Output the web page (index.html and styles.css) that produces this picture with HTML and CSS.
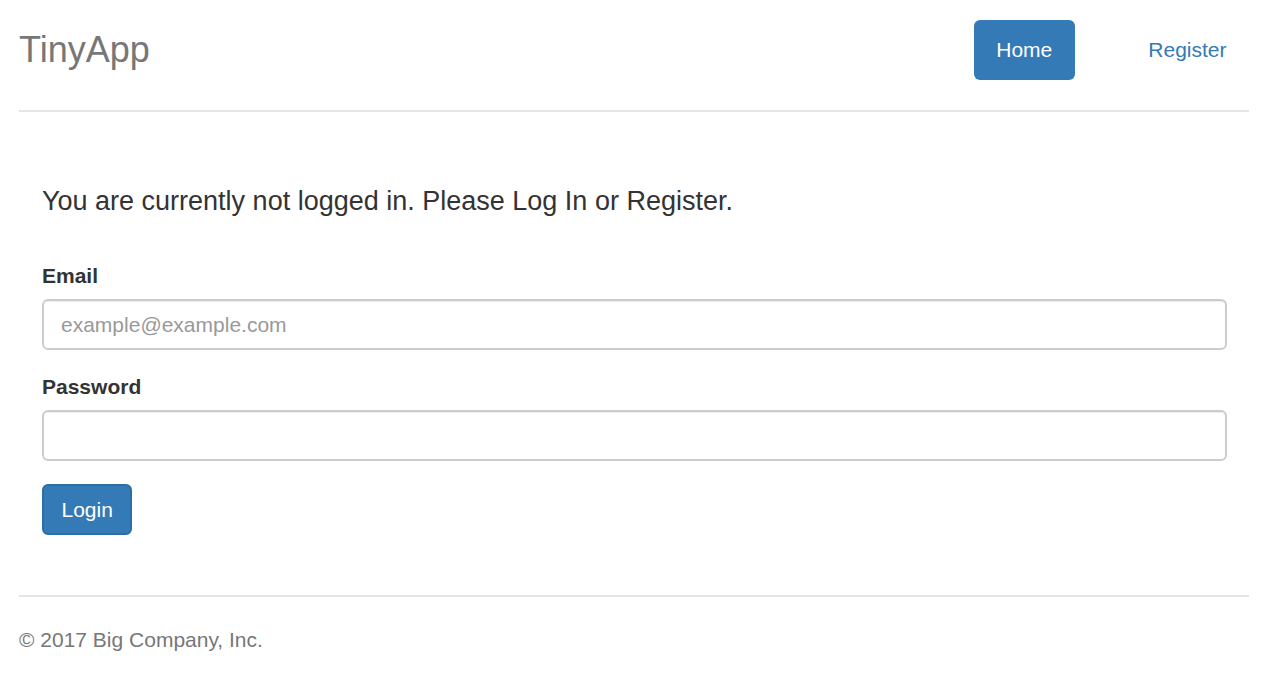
FILE: index.html
```html
<!DOCTYPE html>
<html lang="en">
<head>
<meta charset="utf-8">
<title>TinyApp</title>
<link rel="stylesheet" href="styles.css">
</head>
<body>
<div class="page">
  <header class="header">
    <h3 class="brand">TinyApp</h3>
    <nav class="nav">
      <a class="pill active" href="#">Home</a>
      <a class="pill" href="#">Register</a>
    </nav>
  </header>
  <main class="main">
    <h4 class="notice">You are currently not logged in. Please Log In or Register.</h4>
    <form class="form">
      <div class="form-group">
        <label class="label" for="email">Email</label>
        <input class="input" id="email" type="email" placeholder="example@example.com">
      </div>
      <div class="form-group">
        <label class="label" for="password">Password</label>
        <input class="input" id="password" type="password">
      </div>
      <button class="btn" type="button">Login</button>
    </form>
  </main>
  <footer class="footer">
    <p class="copy">© 2017 Big Company, Inc.</p>
  </footer>
</div>
</body>
</html>
```

FILE: styles.css
```css
* { box-sizing: border-box; }
html, body { margin: 0; padding: 0; background: #fff; }
body {
  font-family: "Liberation Sans", Arial, sans-serif;
  font-size: 21px;
  color: #333;
}
.page {
  padding: 20px 12px 0 19px;
}
.header {
  display: flex;
  justify-content: space-between;
  align-items: center;
  padding-bottom: 30px;
  border-bottom: 2px solid #e5e5e5;
}
.brand {
  margin: 0;
  font-size: 36px;
  font-weight: normal;
  line-height: 60px;
  color: #777;
}
.nav {
  display: flex;
  align-items: center;
}
.pill {
  display: block;
  padding: 15px 22.5px;
  line-height: 30px;
  font-size: 21px;
  color: #337ab7;
  text-decoration: none;
  border-radius: 6px;
}
.pill + .pill { margin-left: 51px; }
.pill.active {
  background: #337ab7;
  color: #fff;
}
.main {
  padding: 74px 22px 60px 23px;
}
.notice {
  margin: 0 0 45px;
  font-size: 27px;
  font-weight: normal;
  line-height: 30px;
  color: #333;
}
.form-group {
  margin-bottom: 22px;
}
.label {
  display: block;
  font-weight: bold;
  font-size: 21px;
  line-height: 30px;
  margin-bottom: 8px;
  color: #333;
}
.input {
  display: block;
  width: 100%;
  height: 51px;
  padding: 6px 17px;
  font-family: inherit;
  font-size: 21px;
  color: #555;
  background: #fff;
  border: 2px solid #ccc;
  border-radius: 6px;
  box-shadow: inset 0 1px 1px rgba(0,0,0,.075);
  outline: none;
}
.input::placeholder { color: #999; }
.btn {
  display: inline-block;
  height: 51px;
  margin-top: 1px;
  padding: 0 17.5px;
  font-family: inherit;
  font-size: 21px;
  line-height: 30px;
  color: #fff;
  background: #337ab7;
  border: 2px solid #2e6da4;
  border-radius: 6px;
  cursor: pointer;
}
.footer {
  border-top: 2px solid #e5e5e5;
  padding-top: 28px;
}
.copy {
  margin: 0;
  font-size: 21px;
  line-height: 30px;
  color: #777;
}
```
